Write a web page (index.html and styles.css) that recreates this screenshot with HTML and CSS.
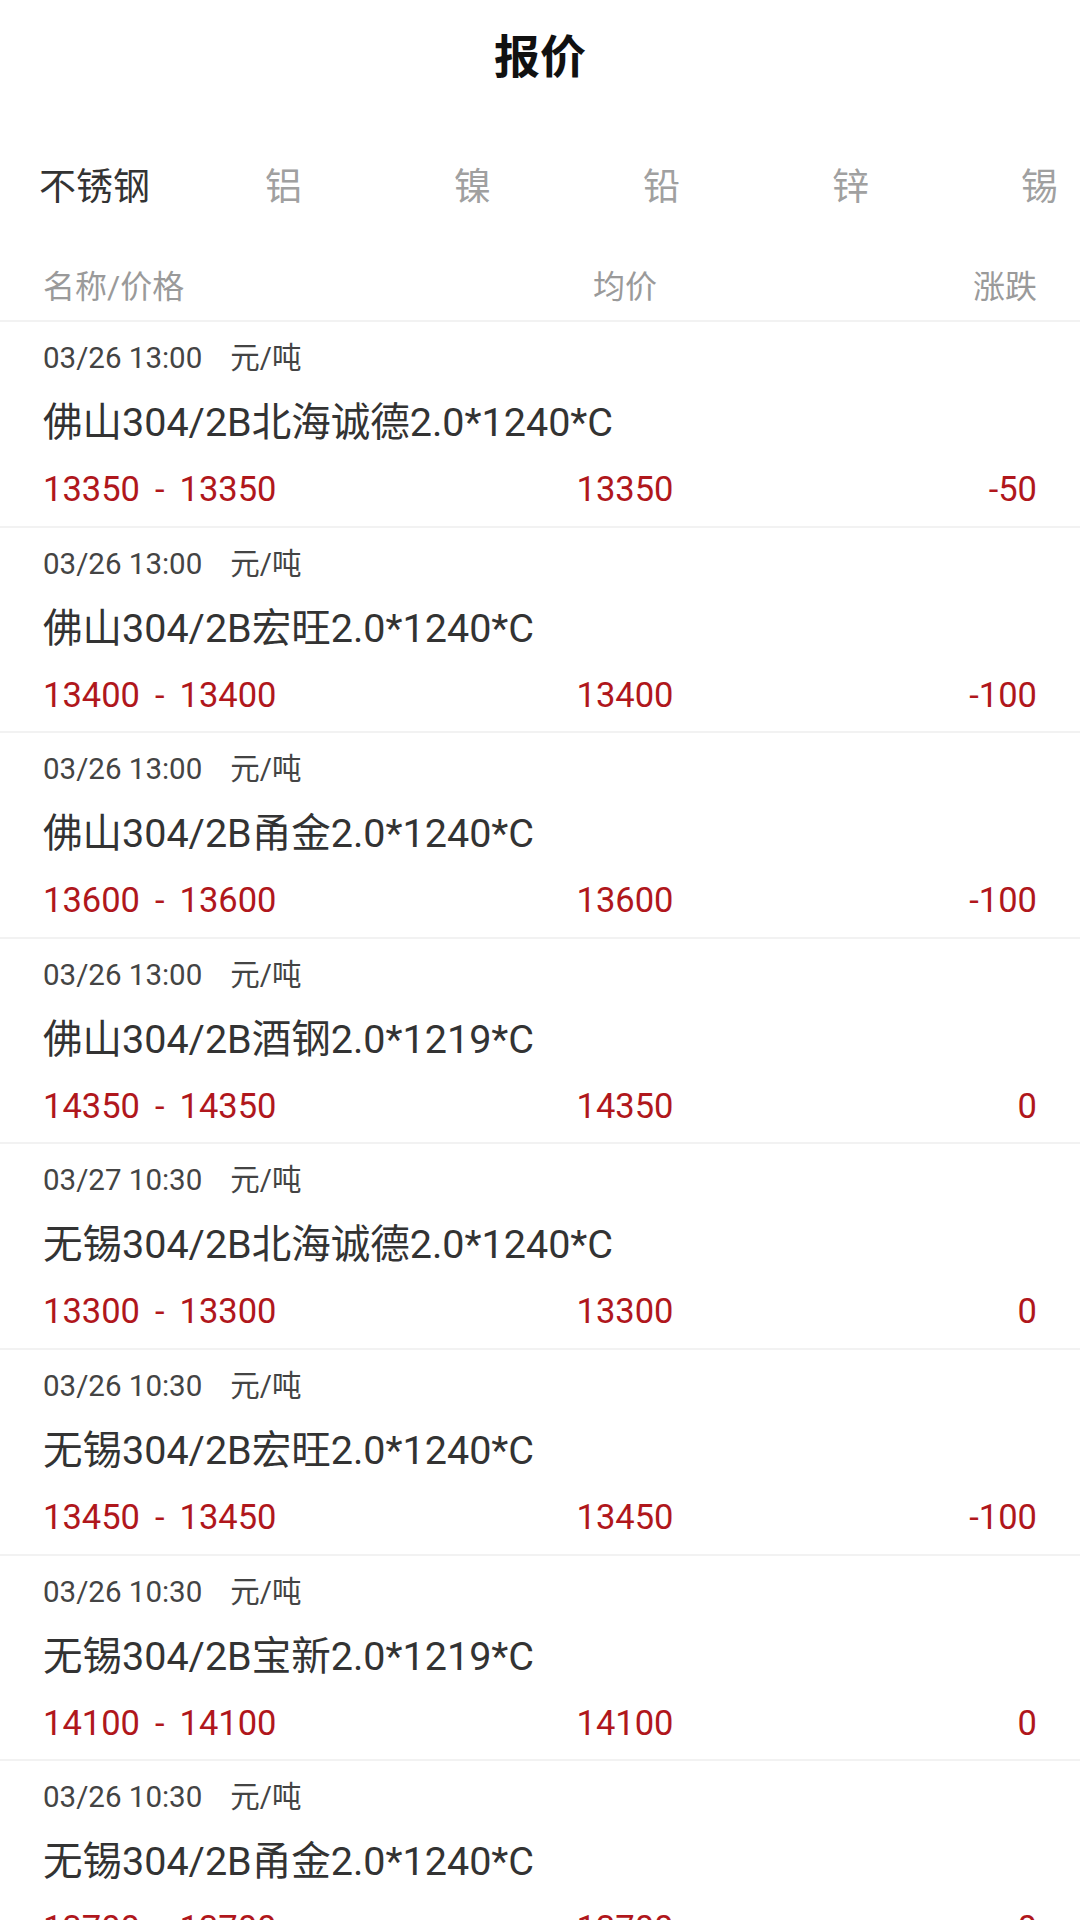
FILE: index.html
```html
<!DOCTYPE html>
<html>
<head>
  <meta charset="UTF-8">
  <title>报价</title>
  <link rel="stylesheet" href="styles.css">
</head>
<body>
  <div id="container">
    <div id="title-bar">报价</div>

    <div id="tabs">
      <div class="tab active">不锈钢</div>
      <div class="tab">铝</div>
      <div class="tab">镍</div>
      <div class="tab">铅</div>
      <div class="tab">锌</div>
      <div class="tab">锡</div>
    </div>

    <div class="cols list-head">
      <div>名称/价格</div>
      <div class="mid">均价</div>
      <div class="right">涨跌</div>
    </div>

    <div id="quote-list">
      <div class="quote">
        <div class="meta">03/26 13:00<span class="unit">元/吨</span></div>
        <div class="name">佛山304/2B北海诚德2.0*1240*C</div>
        <div class="cols prices">
          <div>13350<span class="dash">-</span>13350</div>
          <div class="mid">13350</div>
          <div class="right">-50</div>
        </div>
      </div>

      <div class="quote">
        <div class="meta">03/26 13:00<span class="unit">元/吨</span></div>
        <div class="name">佛山304/2B宏旺2.0*1240*C</div>
        <div class="cols prices">
          <div>13400<span class="dash">-</span>13400</div>
          <div class="mid">13400</div>
          <div class="right">-100</div>
        </div>
      </div>

      <div class="quote">
        <div class="meta">03/26 13:00<span class="unit">元/吨</span></div>
        <div class="name">佛山304/2B甬金2.0*1240*C</div>
        <div class="cols prices">
          <div>13600<span class="dash">-</span>13600</div>
          <div class="mid">13600</div>
          <div class="right">-100</div>
        </div>
      </div>

      <div class="quote">
        <div class="meta">03/26 13:00<span class="unit">元/吨</span></div>
        <div class="name">佛山304/2B酒钢2.0*1219*C</div>
        <div class="cols prices">
          <div>14350<span class="dash">-</span>14350</div>
          <div class="mid">14350</div>
          <div class="right">0</div>
        </div>
      </div>

      <div class="quote">
        <div class="meta">03/27 10:30<span class="unit">元/吨</span></div>
        <div class="name">无锡304/2B北海诚德2.0*1240*C</div>
        <div class="cols prices">
          <div>13300<span class="dash">-</span>13300</div>
          <div class="mid">13300</div>
          <div class="right">0</div>
        </div>
      </div>

      <div class="quote">
        <div class="meta">03/26 10:30<span class="unit">元/吨</span></div>
        <div class="name">无锡304/2B宏旺2.0*1240*C</div>
        <div class="cols prices">
          <div>13450<span class="dash">-</span>13450</div>
          <div class="mid">13450</div>
          <div class="right">-100</div>
        </div>
      </div>

      <div class="quote">
        <div class="meta">03/26 10:30<span class="unit">元/吨</span></div>
        <div class="name">无锡304/2B宝新2.0*1219*C</div>
        <div class="cols prices">
          <div>14100<span class="dash">-</span>14100</div>
          <div class="mid">14100</div>
          <div class="right">0</div>
        </div>
      </div>

      <div class="quote">
        <div class="meta">03/26 10:30<span class="unit">元/吨</span></div>
        <div class="name">无锡304/2B甬金2.0*1240*C</div>
        <div class="cols prices">
          <div>13700<span class="dash">-</span>13700</div>
          <div class="mid">13700</div>
          <div class="right">0</div>
        </div>
      </div>
    </div>
  </div>
</body>
</html>
```

FILE: styles.css
```css
body, html {
  margin: 0;
  padding: 0;
  height: 100%;
  overflow: hidden;
  background-color: #fff;
}

#container {
  width: 1080px;
  height: 100vh;
  display: flex;
  flex-direction: column;
  font-family: Roboto, "Noto Sans CJK SC", sans-serif;
  overflow: hidden;
}

#title-bar {
  height: 114px;
  line-height: 114px;
  text-align: center;
  font-size: 46px;
  font-weight: bold;
  color: #111;
  flex-shrink: 0;
}

#tabs {
  display: flex;
  height: 140px;
  align-items: center;
  flex-shrink: 0;
}

.tab {
  flex: 0 0 189px;
  text-align: center;
  font-size: 37px;
  color: #a0a0a0;
}

.tab.active {
  color: #333;
}

.cols {
  display: grid;
  grid-template-columns: 482px 200px 1fr;
  padding: 0 43px;
}

.cols .mid {
  text-align: center;
}

.cols .right {
  text-align: right;
}

.list-head {
  height: 66px;
  line-height: 66px;
  font-size: 32px;
  color: #9a9a9a;
  border-bottom: 2px solid #f2f2f2;
  flex-shrink: 0;
}

.quote {
  padding: 16px 0 15.6px;
  border-bottom: 2px solid #f2f2f2;
  flex-shrink: 0;
}

.meta {
  padding: 0 43px;
  height: 40px;
  line-height: 40px;
  font-size: 29.5px;
  color: #444;
}

.unit {
  margin-left: 28px;
}

.name {
  padding: 0 43px;
  height: 90px;
  line-height: 90px;
  font-size: 39.5px;
  color: #333;
  white-space: nowrap;
}

.prices {
  height: 42px;
  line-height: 42px;
  font-size: 34.5px;
  color: #b0171c;
}

.dash {
  padding: 0 15px;
}
```
